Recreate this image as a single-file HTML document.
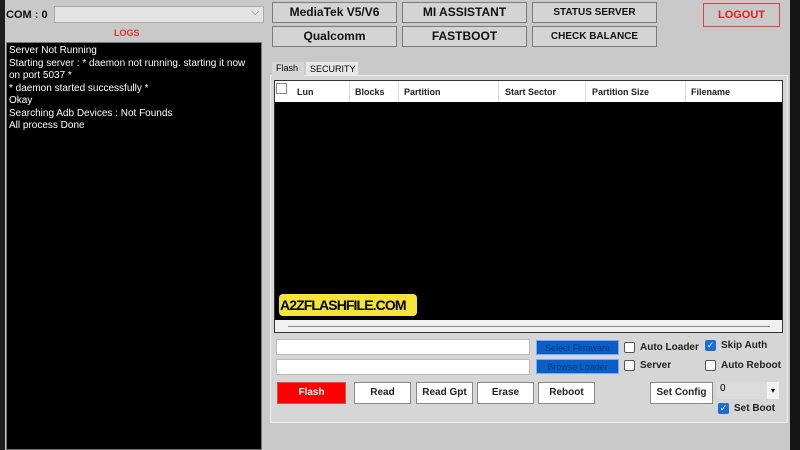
<!DOCTYPE html>
<html><head><style>
*{box-sizing:border-box;margin:0;padding:0}
body{width:800px;height:450px;background:#c9c9c9;font-family:"Liberation Sans",sans-serif;position:relative;overflow:hidden}
.a{position:absolute}
.btn{position:absolute;background:#d4d4d4;border:1px solid #7a7a7a;font-weight:bold;font-size:12px;text-align:center;color:#111}
.wb{position:absolute;background:#fff;border:1px solid #888;font-size:10px;font-weight:bold;text-align:center;line-height:22px;color:#222}
.cb{position:absolute;width:11px;height:11px;border:1px solid #555;background:#fff;border-radius:2px}
.cbc{position:absolute;width:11px;height:11px;background:#1a6fd0;border-radius:2px;color:#fff;font-size:9px;line-height:11px;text-align:center}
.lbl{position:absolute;font-size:10px;font-weight:bold;color:#222}
.th{position:absolute;top:87px;font-size:9px;font-weight:bold;color:#222}
</style></head><body>
<div class="a" style="left:0;top:0;width:5px;height:450px;background:#1e1e1e"></div>
<div class="a" style="left:790px;top:0;width:10px;height:450px;background:#151515"></div>
<div class="a" style="left:6px;top:9px;font-size:11px;font-weight:bold;color:#111">COM : 0</div>
<div class="a" style="left:54px;top:6px;width:210px;height:17px;background:#e4e4e4;border:1px solid #aaa"><span style="position:absolute;right:4px;top:0;font-size:10px;color:#666">⌵</span></div>
<div class="a" style="left:114px;top:28px;font-size:9px;color:#d33;font-weight:bold">LOGS</div>
<div class="a" style="left:6px;top:42px;width:256px;height:408px;background:#000;border:1px solid #777;color:#fff;font-size:10px;line-height:12.5px;padding:2px 2px">Server Not Running<br>Starting server : * daemon not running. starting it now on port 5037 *<br>* daemon started successfully *<br>Okay<br>Searching Adb Devices : Not Founds<br>All process Done</div>
<div class="btn" style="left:272px;top:2px;width:125px;height:21px;line-height:19px">MediaTek V5/V6</div>
<div class="btn" style="left:272px;top:26px;width:125px;height:21px;line-height:19px">Qualcomm</div>
<div class="btn" style="left:402px;top:2px;width:125px;height:21px;line-height:19px">MI ASSISTANT</div>
<div class="btn" style="left:402px;top:26px;width:125px;height:21px;line-height:19px">FASTBOOT</div>
<div class="btn" style="left:532px;top:2px;width:125px;height:21px;line-height:19px;font-size:10px">STATUS SERVER</div>
<div class="btn" style="left:532px;top:26px;width:125px;height:21px;line-height:19px;font-size:10px">CHECK BALANCE</div>
<div class="a" style="left:703px;top:3px;width:77px;height:24px;border:1px solid #e04040;color:#e02020;font-size:11px;font-weight:bold;text-align:center;line-height:22px">LOGOUT</div>
<div class="a" style="left:270px;top:75px;width:518px;height:348px;background:#d6d6d6;border:1px solid #eee"></div>
<div class="a" style="left:272px;top:62px;width:32px;height:14px;background:#d6d6d6;font-size:9px;padding:1px 4px">Flash</div>
<div class="a" style="left:306px;top:62px;width:52px;height:14px;background:#e8e8e8;font-size:9px;padding:2px 4px">SECURITY</div>
<div class="a" style="left:274px;top:80px;width:509px;height:253px;background:#000;border:1px solid #333"></div>
<div class="a" style="left:275px;top:81px;width:507px;height:21px;background:#fff"></div>
<div class="a" style="left:276px;top:83px;width:11px;height:11px;border:1px solid #888"></div>
<div class="th" style="left:297px">Lun</div><div class="th" style="left:355px">Blocks</div><div class="th" style="left:404px">Partition</div><div class="th" style="left:505px">Start Sector</div><div class="th" style="left:592px">Partition Size</div><div class="th" style="left:691px">Filename</div>
<div class="a" style="left:349px;top:81px;width:1px;height:21px;background:#ddd"></div>
<div class="a" style="left:398px;top:81px;width:1px;height:21px;background:#ddd"></div>
<div class="a" style="left:498px;top:81px;width:1px;height:21px;background:#ddd"></div>
<div class="a" style="left:585px;top:81px;width:1px;height:21px;background:#ddd"></div>
<div class="a" style="left:685px;top:81px;width:1px;height:21px;background:#ddd"></div>
<div class="a" style="left:279px;top:294px;width:138px;height:22px;background:#f5e33a;border-radius:4px;font-weight:bold;font-size:14px;line-height:22px;color:#000;padding-left:1px;letter-spacing:-0.9px;white-space:nowrap;overflow:hidden">A2ZFLASHFILE.COM</div>
<div class="a" style="left:275px;top:320px;width:507px;height:12px;background:#f0f0f0"></div>
<div class="a" style="left:288px;top:326px;width:482px;height:1px;background:#888"></div>
<div class="a" style="left:276px;top:339px;width:254px;height:16px;background:#fff;border:1px solid #bbb"></div>
<div class="a" style="left:276px;top:359px;width:254px;height:16px;background:#fff;border:1px solid #bbb"></div>
<div class="a" style="left:536px;top:340px;width:83px;height:15px;background:#0a5ec4;color:#033c8a;font-size:9px;text-align:center;line-height:15px;border:1px solid #7af">Select Firmware</div>
<div class="a" style="left:536px;top:359px;width:83px;height:15px;background:#0a5ec4;color:#033c8a;font-size:9px;text-align:center;line-height:15px;border:1px solid #7af">Browse Loader</div>
<div class="cb" style="left:624px;top:342px"></div><div class="lbl" style="left:640px;top:342px">Auto Loader</div>
<div class="cb" style="left:624px;top:360px"></div><div class="lbl" style="left:640px;top:360px">Server</div>
<div class="cbc" style="left:705px;top:340px">✓</div><div class="lbl" style="left:721px;top:340px">Skip Auth</div>
<div class="cb" style="left:705px;top:360px"></div><div class="lbl" style="left:721px;top:360px">Auto Reboot</div>
<div class="a" style="left:277px;top:382px;width:69px;height:22px;background:#f00;border:1px solid #c55;color:#fff;font-size:10px;font-weight:bold;text-align:center;line-height:20px">Flash</div>
<div class="wb" style="left:354px;top:382px;width:57px;height:22px;line-height:20px">Read</div>
<div class="wb" style="left:416px;top:382px;width:57px;height:22px;line-height:20px">Read Gpt</div>
<div class="wb" style="left:477px;top:382px;width:57px;height:22px;line-height:20px">Erase</div>
<div class="wb" style="left:538px;top:382px;width:57px;height:22px;line-height:20px">Reboot</div>
<div class="wb" style="left:650px;top:382px;width:63px;height:22px;line-height:20px">Set Config</div>
<div class="a" style="left:717px;top:382px;width:62px;height:17px;background:#dcdcdc;font-size:10px;padding:1px 3px">0<span style="position:absolute;right:0;top:0;width:12px;height:17px;background:#f2f2f2;font-size:8px;text-align:center;line-height:17px">▾</span></div>
<div class="cbc" style="left:718px;top:403px">✓</div><div class="lbl" style="left:734px;top:403px">Set Boot</div>
</body></html>
